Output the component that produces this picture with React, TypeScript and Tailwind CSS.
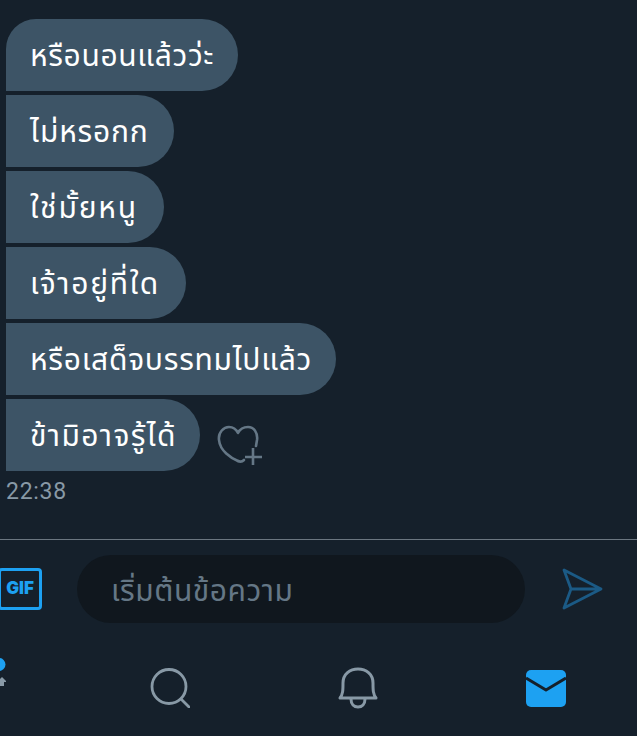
const messages = [
  { text: "หรือนอนแล้วว่ะ", width: "w-[232px]", corner: "rounded-tl-[30px]", spacing: "tracking-[0.65px]" },
  { text: "ไม่หรอกก", width: "w-[168px]", corner: "", spacing: "tracking-[0.8px]" },
  { text: "ใช่มั้ยหนู", width: "w-[158px]", corner: "", spacing: "tracking-[1.8px]" },
  { text: "เจ้าอยู่ที่ใด", width: "w-[180px]", corner: "", spacing: "tracking-[1.7px]" },
  { text: "หรือเสด็จบรรทมไปแล้ว", width: "w-[330px]", corner: "", spacing: "tracking-[0.75px]" },
  { text: "ข้ามิอาจรู้ได้", width: "w-[194px]", corner: "", spacing: "tracking-[1.4px]" },
];

const HeartPlus = () => (
  <svg width="46" height="44" viewBox="0 0 46 44" fill="none" stroke="#657786" strokeWidth="2.6" strokeLinecap="round" strokeLinejoin="round">
    <path d="M21 37 C14 34 3 27 2 16 C1 8 7 3 12 3 C16 3 19 5 21 9 C23 5 27 3 31 3 C37 3 41 9 40 16 L39 22" />
    <path d="M21 37 C23 38 25 38 27 36" />
    <path d="M36 24 V41 M28 33 H45" strokeLinecap="butt" />
  </svg>
);

const GifIcon = () => (
  <div className="flex h-[42px] w-[44px] items-center justify-center rounded-[4px] border-[3px] border-[#1da1f2] font-['Inter','Liberation_Sans',sans-serif] text-[17px] font-black text-[#1da1f2]">
    GIF
  </div>
);

const SendIcon = () => (
  <svg width="42" height="42" viewBox="0 0 42 42" fill="none" stroke="#1b5a85" strokeWidth="2.8" strokeLinejoin="round" strokeLinecap="round">
    <path d="M3 2 L40 21 L3 40 L10 21 Z M10 21 H40" />
  </svg>
);

const PersonIcon = () => (
  <svg width="48" height="60" viewBox="0 0 48 60">
    <circle cx="41" cy="6.5" r="6.5" fill="#1da1f2" />
    <path d="M42 28 L42 23 L39 24 L44 19 L49 24 L46 24 L46 28 Z" fill="#8899a6" />
  </svg>
);

const SearchIcon = () => (
  <svg width="40" height="40" viewBox="0 0 40 40" fill="none" stroke="#8899a6" strokeWidth="2.8" strokeLinecap="round">
    <circle cx="19" cy="18.5" r="17" />
    <path d="M31 31 L39 39" />
  </svg>
);

const BellIcon = () => (
  <svg width="42" height="42" viewBox="0 0 42 42" fill="none" stroke="#8899a6" strokeWidth="3" strokeLinecap="round" strokeLinejoin="round">
    <path d="M3 31 H39 C36 27 36 23 36 16 C36 7 29 2 21 2 C13 2 6 7 6 16 C6 23 6 27 3 31 Z" />
    <path d="M14 32 C14 37 17 40 21 40 C25 40 28 37 28 32" />
  </svg>
);

const MailIcon = () => (
  <svg width="40" height="37" viewBox="0 0 40 37">
    <rect x="0" y="0" width="40" height="37" rx="5" fill="#1da1f2" />
    <path d="M0 8 L20 20 L40 8" fill="none" stroke="#15202b" strokeWidth="3" strokeLinejoin="round" />
  </svg>
);

export default function App() {
  return (
    <div className="h-[736px] w-[637px] overflow-hidden bg-[#15202b] font-['Noto_Sans','Noto_Sans_Thai','Liberation_Sans',sans-serif]">
      {/* ข้อความ */}
      <div className="flex h-[539px] flex-col pl-[6px] pt-[19px]">
        <div className="flex flex-col gap-[4px]">
          {messages.map((m, i) => (
            <div key={i} className="flex items-end">
              <div className={`flex h-[72px] items-center rounded-r-[36px] bg-[#3d5466] pl-[24px] text-[30px] leading-none text-white ${m.width} ${m.corner} ${m.spacing}`}>
                {m.text}
              </div>
              {i === messages.length - 1 && (
                <div className="mb-[3px] ml-[17px]">
                  <HeartPlus />
                </div>
              )}
            </div>
          ))}
        </div>
        <div className="mt-[8px] font-['Roboto',sans-serif] text-[23px] leading-[26px] tracking-[0.7px] text-[#8899a6]">22:38</div>
      </div>

      {/* ช่องพิมพ์ */}
      <div className="h-px bg-[#6b7680]" />
      <div className="mt-[15px] flex items-center">
        <div className="-ml-[2px]">
          <GifIcon />
        </div>
        <div className="ml-[35px] flex h-[68px] w-[448px] items-center rounded-[34px] bg-[#10171e] pl-[34px] text-[30px] tracking-[0.55px] text-[#657786]">
          เริ่มต้นข้อความ
        </div>
        <div className="ml-[36px]">
          <SendIcon />
        </div>
      </div>

      {/* แถบล่าง */}
      <div className="mt-[35px] -ml-[112px] flex items-center">
        <div className="flex w-[188px] shrink-0 justify-center"><PersonIcon /></div>
        <div className="flex w-[188px] shrink-0 justify-center"><SearchIcon /></div>
        <div className="flex w-[188px] shrink-0 justify-center"><BellIcon /></div>
        <div className="flex w-[188px] shrink-0 justify-center"><MailIcon /></div>
      </div>
    </div>
  );
}
